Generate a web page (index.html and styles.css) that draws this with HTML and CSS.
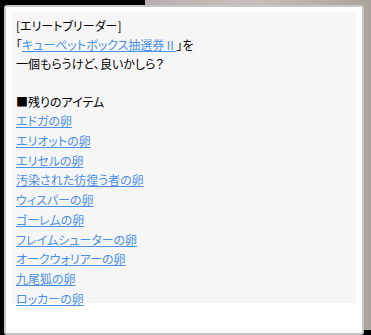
FILE: index.html
```html
<!DOCTYPE html>
<html lang="ja">

<head>
    <meta charset="utf-8">
    <meta name="viewport" content="width=device-width, initial-scale=1.0">
    <title>エリートブリーダー</title>
    <link rel="stylesheet" href="styles.css">
</head>

<body>
    <div class="dialog">
        <div class="panel">
            <p class="serifu">
                [エリートブリーダー]<br>
                ｢<a href="#">キューペットボックス抽選券Ⅱ</a>｣を<br>
                一個もらうけど、良いかしら？
            </p>
            <p class="midashi">■残りのアイテム</p>
            <ul class="liste">
                <li><a href="#">エドガの卵</a></li>
                <li><a href="#">エリオットの卵</a></li>
                <li><a href="#">エリセルの卵</a></li>
                <li><a href="#">汚染された彷徨う者の卵</a></li>
                <li><a href="#">ウィスパーの卵</a></li>
                <li><a href="#">ゴーレムの卵</a></li>
                <li><a href="#">フレイムシューターの卵</a></li>
                <li><a href="#">オークウォリアーの卵</a></li>
                <li><a href="#">九尾狐の卵</a></li>
                <li><a href="#">ロッカーの卵</a></li>
            </ul>
        </div>
    </div>
</body>

</html>
```

FILE: styles.css
```css
body {
    margin: 0;
    width: 371px;
    height: 335px;
    overflow: hidden;
    background:
        linear-gradient(to right, #000 0 4px, transparent 4px),
        linear-gradient(to bottom, transparent 0 330px, #000 330px),
        linear-gradient(to right, #000 0 145px, #b9aeb0 145px, #c8c1bb 250px, #aaa39c 371px);
    font-family: "Noto Sans CJK JP", "Noto Sans", sans-serif;
    font-size: 12px;
    font-feature-settings: "palt";
    color: #000;
}

.dialog {
    margin: 5px 7px 0 4px;
    height: 321px;
    background-color: #fff;
    border: 2px solid #c6c6c6;
    border-radius: 3px;
    padding: 5px 6px 0 6px;
}

.panel {
    background-color: #f6f6f6;
    height: 287px;
    padding: 4px 4px 0 4px;
}

p {
    margin: 0;
}

.serifu {
    line-height: 19px;
    margin-bottom: 19px;
}

.midashi {
    line-height: 19px;
}

.liste {
    list-style: none;
    margin: 0;
    padding: 0;
}

.liste li {
    line-height: 19.75px;
}

a {
    color: #4a90e8;
    text-decoration: underline;
}
```
